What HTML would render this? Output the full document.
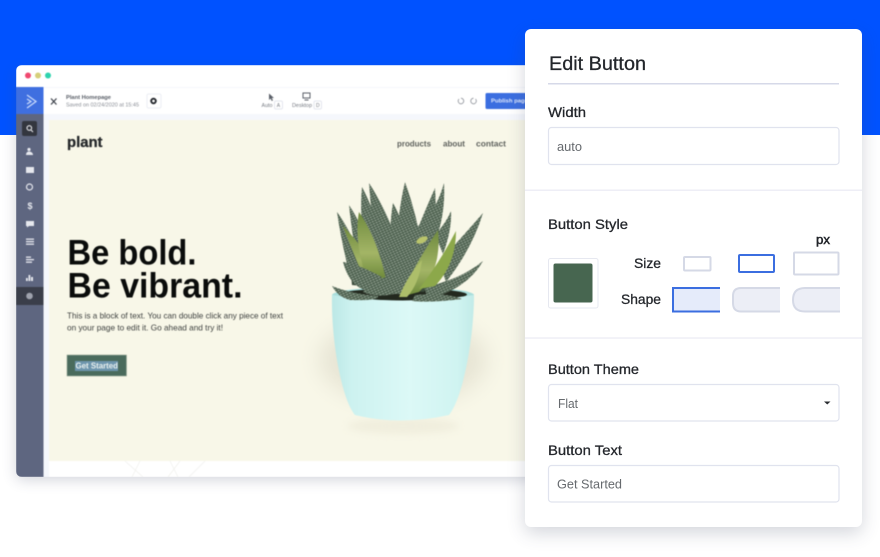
<!DOCTYPE html>
<html lang="en">
<head>
<meta charset="utf-8">
<title>Edit Button</title>
<style>
html,body{margin:0;padding:0;background:#fff;width:880px;height:557px;overflow:hidden}
svg{display:block}
text{font-family:"Liberation Sans",sans-serif}
.lab{fill:#23262b;stroke:#23262b;stroke-width:.28px}
.val{fill:#666a6e}
.field{fill:#fff;stroke:#e0e3ee;stroke-width:1.2}
</style>
</head>
<body>
<svg width="880" height="557" viewBox="0 0 880 557" xmlns="http://www.w3.org/2000/svg">
<defs>
<pattern id="sp" width="3" height="2.4" patternUnits="userSpaceOnUse" patternTransform="rotate(-25)">
<rect width="3" height="2.4" fill="#4a5e4c"/>
<rect x=".2" y=".3" width="2" height="1" fill="#a3b0a2"/>
</pattern>
<linearGradient id="pot" x1="0" x2="1" y1="0" y2="0">
<stop offset="0" stop-color="#bce8e6"/><stop offset=".14" stop-color="#cdf2f0"/>
<stop offset=".55" stop-color="#dcf9f7"/><stop offset=".88" stop-color="#d0f4f1"/><stop offset="1" stop-color="#c2ebe8"/>
</linearGradient>
<linearGradient id="lf" x1="0" x2="0" y1="0" y2="1">
<stop offset="0" stop-color="#6f8a3e"/><stop offset=".6" stop-color="#a3b566"/><stop offset="1" stop-color="#6b8738"/>
</linearGradient>
<clipPath id="win"><rect x="16" y="65" width="524" height="412" rx="6"/></clipPath>
</defs>

<rect width="880" height="135" fill="#0052ff"/>

<!-- app window -->
<rect x="16" y="70" width="524" height="410" rx="6" fill="#4a5270" opacity=".24" style="filter:blur(7px)"/>
<g clip-path="url(#win)" style="filter:blur(.4px)">
<rect x="16" y="65" width="524" height="412" fill="#f5f7fc"/>
<rect x="16" y="65" width="524" height="22" fill="#fff"/>
<circle cx="28" cy="75.500" r="3" fill="#f0486f"/><circle cx="38" cy="75.500" r="3" fill="#d6cf7a"/><circle cx="48" cy="75.500" r="3" fill="#2ed3ae"/>
<rect x="16" y="88" width="524" height="26" fill="#fff"/>
<rect x="49" y="120" width="491" height="341" fill="#f8f7e8"/>
<rect x="49" y="461" width="491" height="16" fill="#fff"/>
<path d="M125 461l18 16M140 461l-8 16M180 461l-12 16M205 461l-16 16M170 461l8 16" stroke="#f1f1ee" fill="none" stroke-width=".8"/>

<!-- sidebar -->
<rect x="16" y="87" width="27.500" height="390" fill="#5e6680"/>
<rect x="16" y="87" width="27.500" height="27" fill="#3f6fe0"/>
<path d="M27 95l9 6.500-9 6.500M27 99l4 2.500-4 2.500" fill="none" stroke="#c9dafc" stroke-width="1.300"/>
<rect x="22" y="121" width="15" height="15" rx="2" fill="#33363f"/>
<circle cx="29.300" cy="128" r="2.300" fill="none" stroke="#e8e8ec" stroke-width="1.100"/><path d="M31 130l2 2" stroke="#e8e8ec" stroke-width="1.100"/>
<g fill="#e6e8ee">
<circle cx="29" cy="149.500" r="1.600"/><path d="M26 155c0-3 2-3.500 3-3.500s4 .5 4 3.500z"/>
<path d="M26 167h8v6h-8z"/>
<circle cx="29.500" cy="187" r="3" fill="none" stroke="#e6e8ee" stroke-width="1.200"/>
<path d="M26 221h8v5h-5l-2 1.500v-1.500h-1z"/>
<rect x="26" y="238.500" width="8" height="1.300"/><rect x="26" y="241" width="8" height="1.300"/><rect x="26" y="243.500" width="8" height="1.300"/>
<rect x="26" y="256.500" width="5" height="1.300"/><rect x="26" y="259" width="8" height="1.300"/><rect x="26" y="261.500" width="6" height="1.300"/>
<rect x="26" y="278" width="1.800" height="3"/><rect x="28.500" y="275" width="1.800" height="6"/><rect x="31" y="277" width="2" height="4"/>
</g>
<text x="27.500" y="209" font-size="9" font-weight="700" fill="#e6e8ee">$</text>
<rect x="16" y="287" width="27.500" height="18" fill="#3a3e4a"/>
<circle cx="29.500" cy="296" r="3.300" fill="#9ea2ad"/>

<!-- toolbar -->
<path d="M51 98.500l5.500 6M56.500 98.500l-5.500 6" stroke="#3a3f48" stroke-width="1.200"/>
<text x="66" y="99" font-size="5.500" font-weight="700" fill="#5a5f68" textLength="45" lengthAdjust="spacingAndGlyphs">Plant Homepage</text>
<text x="66" y="106.500" font-size="5" fill="#8a8e96" textLength="73" lengthAdjust="spacingAndGlyphs">Saved on 02/24/2020 at 15:45</text>
<rect x="147" y="94" width="14" height="14" rx="1.500" fill="#fff" stroke="#eceef4"/>
<circle cx="153.500" cy="101" r="2.300" fill="none" stroke="#22252b" stroke-width="1.900"/>
<path d="M269 93.500v6.500l1.500-1.500 1.300 2.500 1.200-.6-1.200-2.400h2.200z" fill="#5a5f68"/>
<text x="261.500" y="107" font-size="5" fill="#777b83" textLength="11" lengthAdjust="spacingAndGlyphs">Auto</text>
<rect x="274.500" y="101" width="8" height="8" rx="1.500" fill="#fff" stroke="#e4e6ee"/>
<text x="276.800" y="107" font-size="5" fill="#777b83">A</text>
<rect x="303" y="93" width="7" height="5" fill="none" stroke="#5a5f68" stroke-width="1"/><path d="M304.500 100h4" stroke="#5a5f68"/>
<text x="292" y="107" font-size="5" fill="#777b83" textLength="20" lengthAdjust="spacingAndGlyphs">Desktop</text>
<rect x="314" y="101" width="7.500" height="8" rx="1.500" fill="#fff" stroke="#e4e6ee"/>
<text x="316" y="107" font-size="5" fill="#777b83">D</text>
<path d="M459 99a2.800 2.800 0 1 0 2-.8" fill="none" stroke="#8a8e96" stroke-width=".8"/>
<path d="M475.500 99a2.800 2.800 0 1 1-2-.8" fill="none" stroke="#8a8e96" stroke-width=".8"/>
<rect x="485.500" y="93" width="60" height="16" rx="1.500" fill="#3b6ee0"/>
<text x="491" y="102.500" font-size="5.800" font-weight="700" fill="#dfe8fb" textLength="37" lengthAdjust="spacingAndGlyphs">Publish page</text>

<!-- page content -->
<text x="67" y="147" font-size="14.500" font-weight="700" fill="#25282a" stroke="#25282a" stroke-width=".3" textLength="35.500" lengthAdjust="spacingAndGlyphs">plant</text>
<g font-size="8" font-weight="700" fill="#5f625e">
<text x="397" y="146.500" textLength="34" lengthAdjust="spacingAndGlyphs">products</text>
<text x="443" y="146.500" textLength="22" lengthAdjust="spacingAndGlyphs">about</text>
<text x="476" y="146.500" textLength="30" lengthAdjust="spacingAndGlyphs">contact</text>
</g>
<g font-size="35" font-weight="700" fill="#0a0c0b">
<text x="67.500" y="264.500" textLength="129" lengthAdjust="spacingAndGlyphs">Be bold.</text>
<text x="67.500" y="297.500" textLength="175" lengthAdjust="spacingAndGlyphs">Be vibrant.</text>
</g>
<g font-size="8.300" fill="#3c3f3e">
<text x="67" y="318.500" textLength="216" lengthAdjust="spacingAndGlyphs">This is a block of text. You can double click any piece of text</text>
<text x="67" y="330.500" textLength="156" lengthAdjust="spacingAndGlyphs">on your page to edit it. Go ahead and try it!</text>
</g>
<rect x="67" y="355" width="59.500" height="21" fill="#4a6b5c" stroke="#9aa998" stroke-width=".6"/>
<rect x="75" y="361" width="43" height="10" fill="#6d95ad"/>
<text x="75.500" y="368.700" font-size="7.800" font-weight="700" fill="#e9f0ee" textLength="42.500" lengthAdjust="spacingAndGlyphs">Get Started</text>

<!-- plant -->
<ellipse cx="403" cy="360" rx="84" ry="44" fill="#c4bfac" opacity=".32" style="filter:blur(11px)"/>
<ellipse cx="403" cy="426" rx="56" ry="8" fill="#ebe8d6" opacity=".6" style="filter:blur(4px)"/>
<ellipse cx="403" cy="295" rx="71" ry="8" fill="#a9dedb"/>
<ellipse cx="403" cy="294.500" rx="64" ry="6" fill="#23291f"/>
<path d="M332 295C331 338 341 398 355 415Q400 426 449 415C463 398 474 338 474 295Q403 306 332 295Z" fill="url(#pot)"/>

<path d="M352 285Q348 252 377 238L428 228Q442 252 424 292Z" fill="#3c4c3c"/>
<g fill="url(#sp)">
<path d="M349 272Q341 240 337 212Q352 232 368 275Z"/>
<path d="M355 250Q351 225 349 205Q362 224 372 258Z"/>
<path d="M366 258Q359 215 362 187Q377 215 390 268Z"/>
<path d="M377 262Q371 212 369 183Q388 212 405 262Z"/>
<path d="M391 255Q389 225 393 203Q404 222 408 252Z"/>
<path d="M395 265Q397 215 405 182Q417 215 424 258Z"/>
<path d="M407 255Q423 215 435 188Q438 228 428 262Z"/>
<path d="M423 225Q438 205 444 183Q446 216 433 248Z"/>
<path d="M435 235Q446 223 451 211Q452 230 443 254Z"/>
<path d="M439 262Q464 235 483 213Q472 249 446 282Z"/>
<path d="M424 287Q460 280 483 261Q467 289 428 299Z"/>
<path d="M375 294Q365 245 393 232Q420 222 429 228Q425 258 405 294Z"/>
</g>
<path d="M358 264Q346 235 343 226Q362 245 382 278Q372 287 366 282Z" fill="url(#lf)"/>
<path d="M365 274Q354 238 359 212Q378 240 386 280Z" fill="url(#lf)"/>
<path d="M400 297Q416 262 438 230Q442 270 419 292Z" fill="url(#lf)"/>
<path d="M419 289Q440 262 456 231Q456 264 435 286Z" fill="#8ca84a"/>
<path d="M399 297Q408 275 422 260Q419 284 407 297Z" fill="#adbe6a"/>
<ellipse cx="422" cy="240" rx="6" ry="3" transform="rotate(-25 422 240)" fill="#b9c46c"/>
<g fill="url(#sp)">
<path d="M343 262Q358 264 382 277Q366 292 362 289Q348 282 343 262Z"/>
<path d="M363 292Q372 275 400 277Q403 288 394 294Q375 298 363 292Z"/>
<path d="M332 286Q352 294 378 296Q380 301 350 300Q338 297 332 286Z"/>
<path d="M415 295Q445 292 462 299Q430 303 412 301Z"/>
</g>
</g>

<!-- edit panel -->
<rect x="525" y="36" width="337" height="497" rx="6" fill="#3c4560" opacity=".22" style="filter:blur(9px)"/>
<rect x="525" y="29" width="337" height="498" rx="6" fill="#fff"/>
<text x="549" y="70" font-size="19" class="lab" textLength="97" lengthAdjust="spacingAndGlyphs">Edit Button</text>
<rect x="548" y="83" width="291" height="1.500" fill="#d6d9e8"/>
<text x="548" y="117" font-size="14" class="lab" textLength="38" lengthAdjust="spacingAndGlyphs">Width</text>
<rect x="548.500" y="127.500" width="290.500" height="37" rx="3" class="field"/>
<text x="557" y="151" font-size="13" class="val" textLength="25" lengthAdjust="spacingAndGlyphs">auto</text>
<rect x="525" y="189.500" width="337" height="1.500" fill="#eeeef6"/>

<text x="548" y="229" font-size="14" class="lab" textLength="80" lengthAdjust="spacingAndGlyphs">Button Style</text>
<text x="816" y="244" font-size="12.500" class="lab" style="stroke-width:.5px" textLength="14" lengthAdjust="spacingAndGlyphs">px</text>
<text x="634" y="268" font-size="14" class="lab" textLength="27" lengthAdjust="spacingAndGlyphs">Size</text>
<text x="621" y="304" font-size="14" class="lab" textLength="40" lengthAdjust="spacingAndGlyphs">Shape</text>
<rect x="548.500" y="258.500" width="49.500" height="49.500" rx="2" fill="#fff" stroke="#e6e8f0"/>
<rect x="553.500" y="263.500" width="39" height="39" rx="2" fill="#476650"/>
<rect x="684" y="257" width="26.500" height="13.500" rx="1" fill="#fff" stroke="#d5d9e6" stroke-width="2"/>
<rect x="739" y="255" width="35" height="17" rx="1" fill="#fff" stroke="#3b6ee0" stroke-width="2"/>
<rect x="794" y="252.500" width="44.500" height="22" rx="1" fill="#fff" stroke="#d5d9e6" stroke-width="2"/>
<path d="M720 288H673V311.500H720" fill="#e5ebfa" stroke="#3b6ee0" stroke-width="2"/>
<path d="M780 288H741Q733 288 733 296V303Q733 311.500 741 311.500H780" fill="#eceef6" stroke="#d5d9e6" stroke-width="2"/>
<path d="M840 288H805Q793 288 793 300Q793 311.500 805 311.500H840" fill="#eceef6" stroke="#d5d9e6" stroke-width="2"/>
<rect x="525" y="337.300" width="337" height="1.500" fill="#eeeef6"/>

<text x="548" y="374" font-size="14" class="lab" textLength="91" lengthAdjust="spacingAndGlyphs">Button Theme</text>
<rect x="548.500" y="384.500" width="290.500" height="36.500" rx="3" class="field"/>
<text x="558" y="408" font-size="13" class="val" textLength="20" lengthAdjust="spacingAndGlyphs">Flat</text>
<path d="M824 401.500h6.500l-3.250 3z" fill="#2a2d31"/>
<text x="548" y="455" font-size="14" class="lab" textLength="74" lengthAdjust="spacingAndGlyphs">Button Text</text>
<rect x="548.500" y="465.500" width="290.500" height="36.500" rx="3" class="field"/>
<text x="557" y="488.500" font-size="13" class="val" textLength="65" lengthAdjust="spacingAndGlyphs">Get Started</text>
</svg>
</body>
</html>
